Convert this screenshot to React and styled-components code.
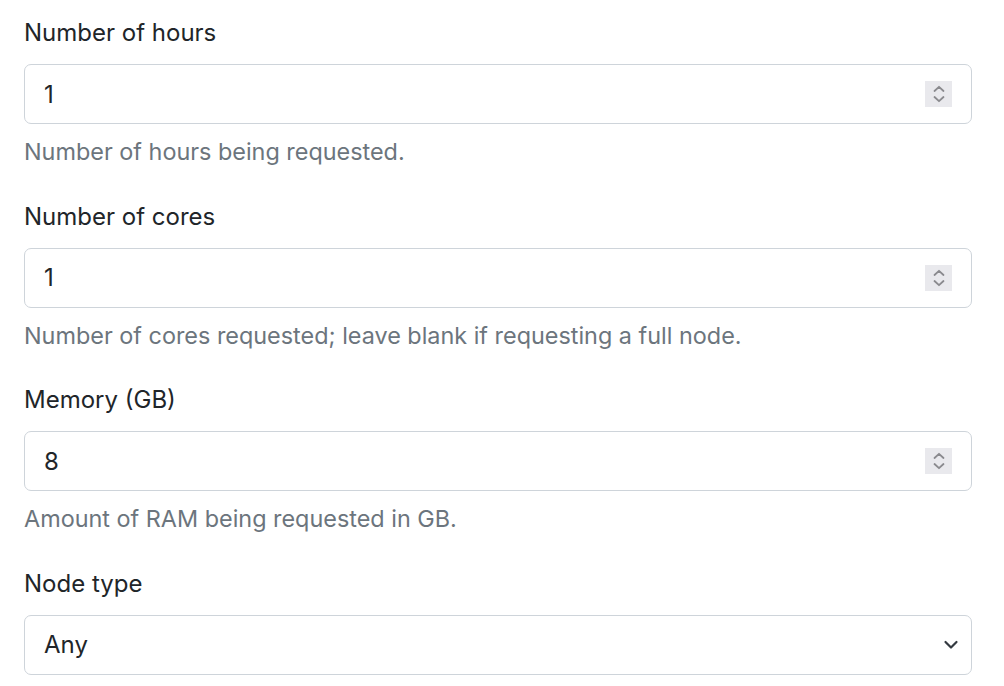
import React from "react";
import styled, { createGlobalStyle } from "styled-components";

const GlobalStyle = createGlobalStyle`
  html, body {
    margin: 0;
    padding: 0;
    background: #fff;
  }
  body {
    font-family: Inter, "Liberation Sans", sans-serif;
    color: #212529;
  }
`;

const Form = styled.form`
  width: 948px;
  padding: 15px 0 0 24px;
`;

const Group = styled.div`
  display: flex;
  flex-direction: column;
  margin-bottom: 28.67px;
`;

const Label = styled.label`
  font-size: 24px;
  line-height: 36px;
  color: #212529;
  margin-bottom: 13px;
`;

const Field = styled.div`
  position: relative;
`;

const Input = styled.input`
  box-sizing: border-box;
  display: block;
  width: 100%;
  height: 60px;
  padding: 0 19px;
  font-family: inherit;
  font-size: 24px;
  color: #212529;
  background: #fff;
  border: 1px solid #ced4da;
  border-radius: 7px;
  outline: none;
`;

const Select = styled.select`
  box-sizing: border-box;
  display: block;
  width: 100%;
  height: 60px;
  padding: 0 19px;
  font-family: inherit;
  font-size: 24px;
  color: #212529;
  background: #fff;
  border: 1px solid #ced4da;
  border-radius: 7px;
  outline: none;
  appearance: none;
  -webkit-appearance: none;
`;

const Spinner = styled.span`
  position: absolute;
  right: 20px;
  top: 50%;
  transform: translateY(-50%);
  width: 27px;
  height: 26px;
  background: #e9e9ed;
  display: flex;
  align-items: center;
  justify-content: center;
`;

const Caret = styled.span`
  position: absolute;
  right: 9px;
  top: 50%;
  transform: translateY(-50%);
  display: flex;
  pointer-events: none;
`;

const Help = styled.small`
  display: block;
  margin-top: 10px;
  font-size: 23.4px;
  line-height: 36px;
  color: #6c757d;
`;

function NumberField({ id, label, value, help }) {
  return (
    <Group>
      <Label htmlFor={id}>{label}</Label>
      <Field>
        <Input id={id} type="text" defaultValue={value} readOnly />
        <Spinner>
          <svg width="14" height="20" viewBox="0 0 14 20" fill="none">
            <path d="M2.5 7 L7 2.8 L11.5 7" stroke="#8a8a8e" strokeWidth="1.8" strokeLinecap="round" strokeLinejoin="round" />
            <path d="M2.5 13 L7 17.2 L11.5 13" stroke="#8a8a8e" strokeWidth="1.8" strokeLinecap="round" strokeLinejoin="round" />
          </svg>
        </Spinner>
      </Field>
      <Help>{help}</Help>
    </Group>
  );
}

export default function App() {
  return (
    <>
      <GlobalStyle />
      <Form>
        <NumberField id="hours" label="Number of hours" value="1" help="Number of hours being requested." />
        <NumberField
          id="cores"
          label="Number of cores"
          value="1"
          help="Number of cores requested; leave blank if requesting a full node."
        />
        <NumberField id="memory" label="Memory (GB)" value="8" help="Amount of RAM being requested in GB." />
        <Group>
          <Label htmlFor="node">Node type</Label>
          <Field>
            <Select id="node" defaultValue="any">
              <option value="any">Any</option>
            </Select>
            <Caret>
              <svg width="24" height="16" viewBox="0 0 24 16" fill="none">
                <path d="M6.5 5 L12 10.5 L17.5 5" stroke="#343a40" strokeWidth="2.2" strokeLinecap="round" strokeLinejoin="round" />
              </svg>
            </Caret>
          </Field>
        </Group>
      </Form>
    </>
  );
}
